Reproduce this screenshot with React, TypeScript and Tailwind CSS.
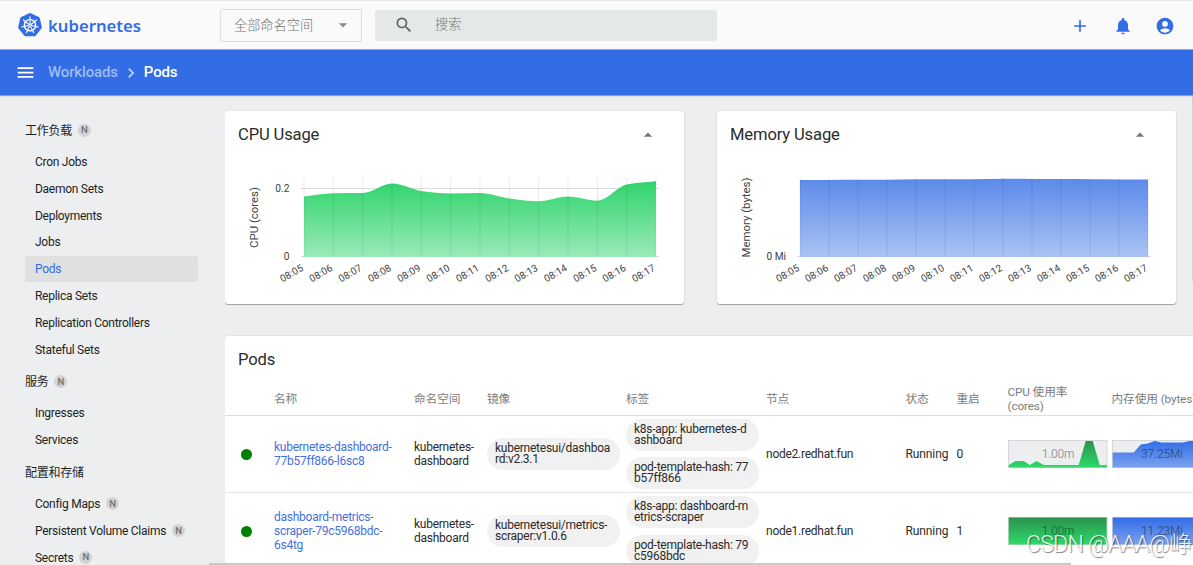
import { MdAccountCircle, MdAdd, MdArrowDropDown, MdArrowDropUp, MdChevronRight, MdMenu, MdNotifications, MdSearch } from 'react-icons/md';
import clsx from 'clsx';

type NavItem = { label: string; badge?: boolean; active?: boolean };
type NavGroup = { title: string; badge?: boolean; items: NavItem[] };

const navGroups: NavGroup[] = [
  {
    title: '工作负载',
    badge: true,
    items: [
      { label: 'Cron Jobs' },
      { label: 'Daemon Sets' },
      { label: 'Deployments' },
      { label: 'Jobs' },
      { label: 'Pods', active: true },
      { label: 'Replica Sets' },
      { label: 'Replication Controllers' },
      { label: 'Stateful Sets' },
    ],
  },
  { title: '服务', badge: true, items: [{ label: 'Ingresses' }, { label: 'Services' }] },
  {
    title: '配置和存储',
    items: [
      { label: 'Config Maps', badge: true },
      { label: 'Persistent Volume Claims', badge: true },
      { label: 'Secrets', badge: true },
    ],
  },
];

const times = ['08:05', '08:06', '08:07', '08:08', '08:09', '08:10', '08:11', '08:12', '08:13', '08:14', '08:15', '08:16', '08:17'];

type Pod = {
  name: string[];
  namespace: string[];
  image: string[];
  labels: string[][];
  node: string;
  restarts: number;
  cpu: string;
  memory: string;
  cpuArea: string;
  memoryArea: string;
};

const pods: Pod[] = [
  {
    name: ['kubernetes-dashboard-', '77b57ff866-l6sc8'],
    namespace: ['kubernetes-', 'dashboard'],
    image: ['kubernetesui/dashboa', 'rd:v2.3.1'],
    labels: [['k8s-app: kubernetes-d', 'ashboard'], ['pod-template-hash: 77', 'b57ff866']],
    node: 'node2.redhat.fun',
    restarts: 0,
    cpu: '1.00m',
    memory: '37.25Mi',
    cpuArea: 'M0 27V24.5L7 20.5H15L21 24.5L28 20.5L35 24.5H70L77 0.5H84L91 24.5H98V27Z',
    memoryArea: 'M0 27V12H21L28 4L35 3L42 0.5L49 2H70L77 0.5H98V27Z',
  },
  {
    name: ['dashboard-metrics-', 'scraper-79c5968bdc-', '6s4tg'],
    namespace: ['kubernetes-', 'dashboard'],
    image: ['kubernetesui/metrics-', 'scraper:v1.0.6'],
    labels: [['k8s-app: dashboard-m', 'etrics-scraper'], ['pod-template-hash: 79', 'c5968bdc']],
    node: 'node1.redhat.fun',
    restarts: 1,
    cpu: '1.00m',
    memory: '11.23Mi',
    cpuArea: 'M0 0H98V27H0Z',
    memoryArea: 'M0 0H98V27H0Z',
  },
];

const columns = 'grid grid-cols-[49px_140px_73px_139px_140px_139.5px_51px_51px_104px_104px]';

// smooth line that never overshoots its points
const monotonePath = (xs: number[], ys: number[]) => {
  const n = xs.length;
  const slopes = xs.slice(1).map((x, i) => (ys[i + 1] - ys[i]) / (x - xs[i]));
  const tangents = xs.map((_, i) => {
    if (i === 0) return slopes[0];
    if (i === n - 1) return slopes[n - 2];
    const a = slopes[i - 1];
    const b = slopes[i];
    return a * b <= 0 ? 0 : Math.sign(a) * Math.min(Math.abs(a), Math.abs(b), Math.abs(a + b) / 4) * 2;
  });
  let d = `M${xs[0]} ${ys[0]}`;
  for (let i = 1; i < n; i++) {
    const dx = (xs[i] - xs[i - 1]) / 3;
    d += `C${xs[i - 1] + dx} ${ys[i - 1] + dx * tangents[i - 1]} ${xs[i] - dx} ${ys[i] - dx * tangents[i]} ${xs[i]} ${ys[i]}`;
  }
  return d;
};

const Badge = () => (
  <span className="ml-1.5 flex size-[13px] items-center justify-center rounded-full bg-[#d2d3d5] text-[9.5px] font-medium tracking-normal text-[#6f7173]">N</span>
);

const KubernetesLogo = () => {
  const spokes = [0, 1, 2, 3, 4, 5, 6].map((i) => (i * 360) / 7);
  return (
    <svg width="26" height="26" viewBox="0 0 26 26">
      <path d="M12.2 1.3Q13 .9 13.8 1.3L21.8 5.1Q22.6 5.5 22.8 6.3L24.8 15Q25 15.9 24.4 16.6L18.9 23.6Q18.4 24.3 17.5 24.3H8.5Q7.6 24.3 7.1 23.6L1.6 16.6Q1 15.9 1.2 15L3.2 6.3Q3.4 5.5 4.2 5.1Z" fill="#326de6" />
      <circle cx="13" cy="13.2" r="5.6" fill="none" stroke="#fff" strokeWidth="1.4" />
      {spokes.map((angle) => (
        <path key={angle} d="M13 11.9V4.8" stroke="#fff" strokeWidth="1.1" strokeLinecap="round" transform={`rotate(${angle} 13 13.2)`} />
      ))}
      <circle cx="13" cy="13.2" r="1.7" fill="#fff" />
      <circle cx="13" cy="13.2" r=".7" fill="#326de6" />
    </svg>
  );
};

type UsageCardProps = {
  id: string;
  title: string;
  axis: string;
  start: number;
  step: number;
  axisX: number;
  values: number[];
  ticks: { label: string; y: number }[];
  tickX: number;
  colors: [string, string];
};

const UsageCard = ({ id, title, axis, start, step, axisX, values, ticks, tickX, colors }: UsageCardProps) => {
  const xs = times.map((_, i) => start + i * step);
  const end = xs[xs.length - 1];
  return (
    <section className="h-[193px] w-[459px] rounded-[3px] bg-white shadow-[0_1px_1px_rgba(0,0,0,0.3),0_0_2px_rgba(0,0,0,0.1)]">
      <div className="flex h-[47px] items-center justify-between pr-[26px] pl-[13px]">
        <h2 className="pt-px text-[16.6px] tracking-[-0.15px] text-[#2b2b2b]">{title}</h2>
        <MdArrowDropUp size={20} className="text-[#757575]" />
      </div>
      <svg width="459" height="140" viewBox="0 47 459 140" className="block" fill="#424242">
        <defs>
          <linearGradient id={id} x1="0" y1="0" x2="0" y2="1">
            <stop offset="0" stopColor={colors[0]} />
            <stop offset="1" stopColor={colors[1]} />
          </linearGradient>
        </defs>
        {ticks.map(({ label, y }) => (
          <g key={label}>
            <path d={`M${start - 3} ${y}H${end + 3}`} stroke="#dddddd" />
            <text x={tickX} y={y + 3.8} textAnchor="end" fontSize="10.2">{label}</text>
          </g>
        ))}
        <path d={`${monotonePath(xs, values)}V146H${start}Z`} fill={`url(#${id})`} />
        {xs.map((x, i) => (
          <g key={times[i]}>
            <path d={`M${x} 67V146`} stroke="#000" strokeOpacity=".08" />
            <text textAnchor="end" fontSize="10" transform={`translate(${x} 159) rotate(-30)`}>{times[i]}</text>
          </g>
        ))}
        <text textAnchor="middle" fontSize="11.4" transform={`translate(${axisX} 106.5) rotate(-90)`}>{axis}</text>
      </svg>
    </section>
  );
};

const Lines = ({ lines }: { lines: string[] }) => (
  <>
    {lines.map((line) => (
      <span key={line} className="block whitespace-nowrap">{line}</span>
    ))}
  </>
);

const Chip = ({ lines }: { lines: string[] }) => (
  <div className="flex h-8 w-[133px] flex-col justify-center rounded-2xl bg-[#f1f1f1] pl-2 text-[12px] leading-[11px]">
    <Lines lines={lines} />
  </div>
);

type SparklineProps = { id: string; area: string; value: string; from: string; to: string };

const Sparkline = ({ id, area, value, from, to }: SparklineProps) => (
  <svg width="100" height="28" viewBox="0 0 100 28" className="block">
    <defs>
      <linearGradient id={id} gradientUnits="userSpaceOnUse" x1="0" y1="0" x2="0" y2="27">
        <stop offset="0" stopColor={from} />
        <stop offset="1" stopColor={to} />
      </linearGradient>
    </defs>
    <rect x=".5" y=".5" width="98.5" height="27" fill="#eceef0" stroke="#d5d7d9" />
    <path d={area} transform="translate(.7 .5)" fill={`url(#${id})`} />
    <text x="50" y="18" textAnchor="middle" fontSize="12" fill="#000" fillOpacity=".38">{value}</text>
  </svg>
);

const PodRow = ({ pod, index }: { pod: Pod; index: number }) => (
  <div className={clsx(columns, 'h-[77.3px] items-center border-b border-[#e4e4e4] text-[12px] leading-[13.8px] tracking-[-0.25px] text-[#2b2b2b]')}>
    <span className="ml-4 size-[11px] rounded-full bg-[#008000]" />
    <div className="pt-px text-[#4470dc]"><Lines lines={pod.name} /></div>
    <div className="pt-px"><Lines lines={pod.namespace} /></div>
    <Chip lines={pod.image} />
    <div className="flex flex-col gap-[6.5px]">
      {pod.labels.map((label) => <Chip key={label[0]} lines={label} />)}
    </div>
    <div className="pt-px">{pod.node}</div>
    <div className="pt-px tracking-[-0.1px]">Running</div>
    <div className="pt-px">{pod.restarts}</div>
    <Sparkline id={`cpu-${index}`} area={pod.cpuArea} value={pod.cpu} from="#2c9150" to="#2bdb68" />
    <Sparkline id={`memory-${index}`} area={pod.memoryArea} value={pod.memory} from="#326de6" to="#7ba1ef" />
  </div>
);

const App = () => {
  return (
    <div className="relative flex h-[565px] w-[1193px] flex-col overflow-hidden bg-[#eceef0] font-[Roboto,'Noto_Sans_CJK_SC',sans-serif] text-[#1f1f1f]">
      <header className="flex h-[50px] shrink-0 items-center border-t border-b border-t-[#e8e8e8] border-b-[#8fa9dd] bg-[#fafafa] pl-[17px]">
        <div className="flex w-[203px] items-center gap-[5px] text-[#326de6]">
          <KubernetesLogo />
          <span className="pt-0.5 font-['Noto_Sans',sans-serif] text-[16.7px] leading-5 font-semibold">kubernetes</span>
        </div>
        <div className="flex h-[33px] w-[142px] items-center justify-between rounded-[2px] border border-[#dedede] pr-2 pl-[13px] text-[13.2px] font-light text-[#757575]">
          <span className="pt-0.5">全部命名空间</span>
          <MdArrowDropDown size={20} className="text-[#8d8d8d]" />
        </div>
        <div className="ml-[13px] flex h-[31px] w-[342px] items-center gap-[21px] rounded-[2px] bg-[#e5e8e8] pl-[19px] text-[13.2px] font-light text-[#757575]">
          <MdSearch size={20} className="text-[#616161]" />
          搜索
        </div>
        <div className="ml-auto flex items-center gap-[22.5px] pt-0.5 pr-[18px] text-[#326de6]">
          <MdAdd size={20} />
          <MdNotifications size={20} />
          <MdAccountCircle size={20} />
        </div>
      </header>

      <nav className="z-10 flex h-[45px] shrink-0 items-center bg-[#326de6] pl-[15px] text-[15px] font-medium tracking-[-0.15px] text-white shadow-[0_1px_1px_rgba(0,0,0,0.35)]">
        <MdMenu size={21} />
        <span className="ml-3 text-[#a0bbf4]">Workloads</span>
        <MdChevronRight size={20} className="mx-[3px] text-[#c1d3f8]" />
        <span>Pods</span>
      </nav>

      <div className="flex min-h-0 flex-1">
        <aside className="w-[225px] shrink-0 pt-[17px] pl-[25px] text-[12px] tracking-[-0.27px]">
          {navGroups.map((group) => (
            <div key={group.title}>
              <div className="flex h-[37px] items-center">
                <span className="pt-px">{group.title}</span>
                {group.badge && <Badge />}
              </div>
              {group.items.map((item) => (
                <div
                  key={item.label}
                  className={clsx('mb-[0.8px] flex h-[26px] w-[172.5px] items-center rounded-[2px] pl-2.5', item.active && 'bg-[#e0e0e0] text-[#326de6]')}
                >
                  {item.label}
                  {item.badge && <Badge />}
                </div>
              ))}
            </div>
          ))}
        </aside>

        <main className="w-[968px] overflow-hidden pt-4">
          <div className="flex gap-[33px]">
            <UsageCard
              id="cpu-usage"
              title="CPU Usage"
              axis="CPU (cores)"
              start={79}
              step={29.33}
              axisX={33}
              values={[85.5, 82.2, 82, 72.5, 80, 82.5, 82, 87.5, 90.3, 85.5, 89.7, 73.5, 70.2]}
              ticks={[{ label: '0.2', y: 77.5 }, { label: '0', y: 145.5 }]}
              tickX={64.5}
              colors={['#2fd46c', '#9beab9']}
            />
            <UsageCard
              id="memory-usage"
              title="Memory Usage"
              axis="Memory (bytes)"
              start={83}
              step={29}
              axisX={33}
              values={[69, 69, 68.8, 68.8, 68.3, 68.2, 68.2, 67.7, 68, 68, 68.2, 68.4, 68.4]}
              ticks={[{ label: '0 Mi', y: 145.5 }]}
              tickX={69}
              colors={['#5b8aea', '#abc3f4']}
            />
          </div>

          <section className="mt-8 h-[260px] w-[1000px] rounded-[3px] bg-white shadow-[0_0_2px_rgba(0,0,0,0.15)]">
            <h2 className="flex h-[47px] items-center pt-px pl-[13px] text-[16.6px] tracking-[-0.15px] text-[#2b2b2b]">Pods</h2>
            <div className={clsx(columns, 'h-[33px] items-center border-b border-[#dedede] text-[11.7px] leading-[14px] tracking-[-0.1px] text-[#7c7c7c]')}>
              <span />
              <span>名称</span>
              <span>命名空间</span>
              <span>镜像</span>
              <span>标签</span>
              <span>节点</span>
              <span>状态</span>
              <span>重启</span>
              <span>CPU 使用率<br />(cores)</span>
              <span className="whitespace-nowrap">内存使用 (bytes)</span>
            </div>
            {pods.map((pod, index) => <PodRow key={pod.name[0]} pod={pod} index={index} />)}
          </section>
        </main>
      </div>

      <div className="absolute bottom-0 left-[209px] h-0.5 w-[862px] bg-[#c9c9c9]" />
      <div className="absolute top-24 right-0 h-[185px] w-px bg-[#d0d1d3]" />
      <div className="absolute top-[531px] left-[1026px] z-20 text-[23px] leading-7 font-light tracking-[-0.75px] whitespace-nowrap text-white/90 [text-shadow:1px_1px_1px_rgba(0,0,0,0.5)]">
        CSDN @AAA@峥
      </div>
    </div>
  );
};

export default App;
